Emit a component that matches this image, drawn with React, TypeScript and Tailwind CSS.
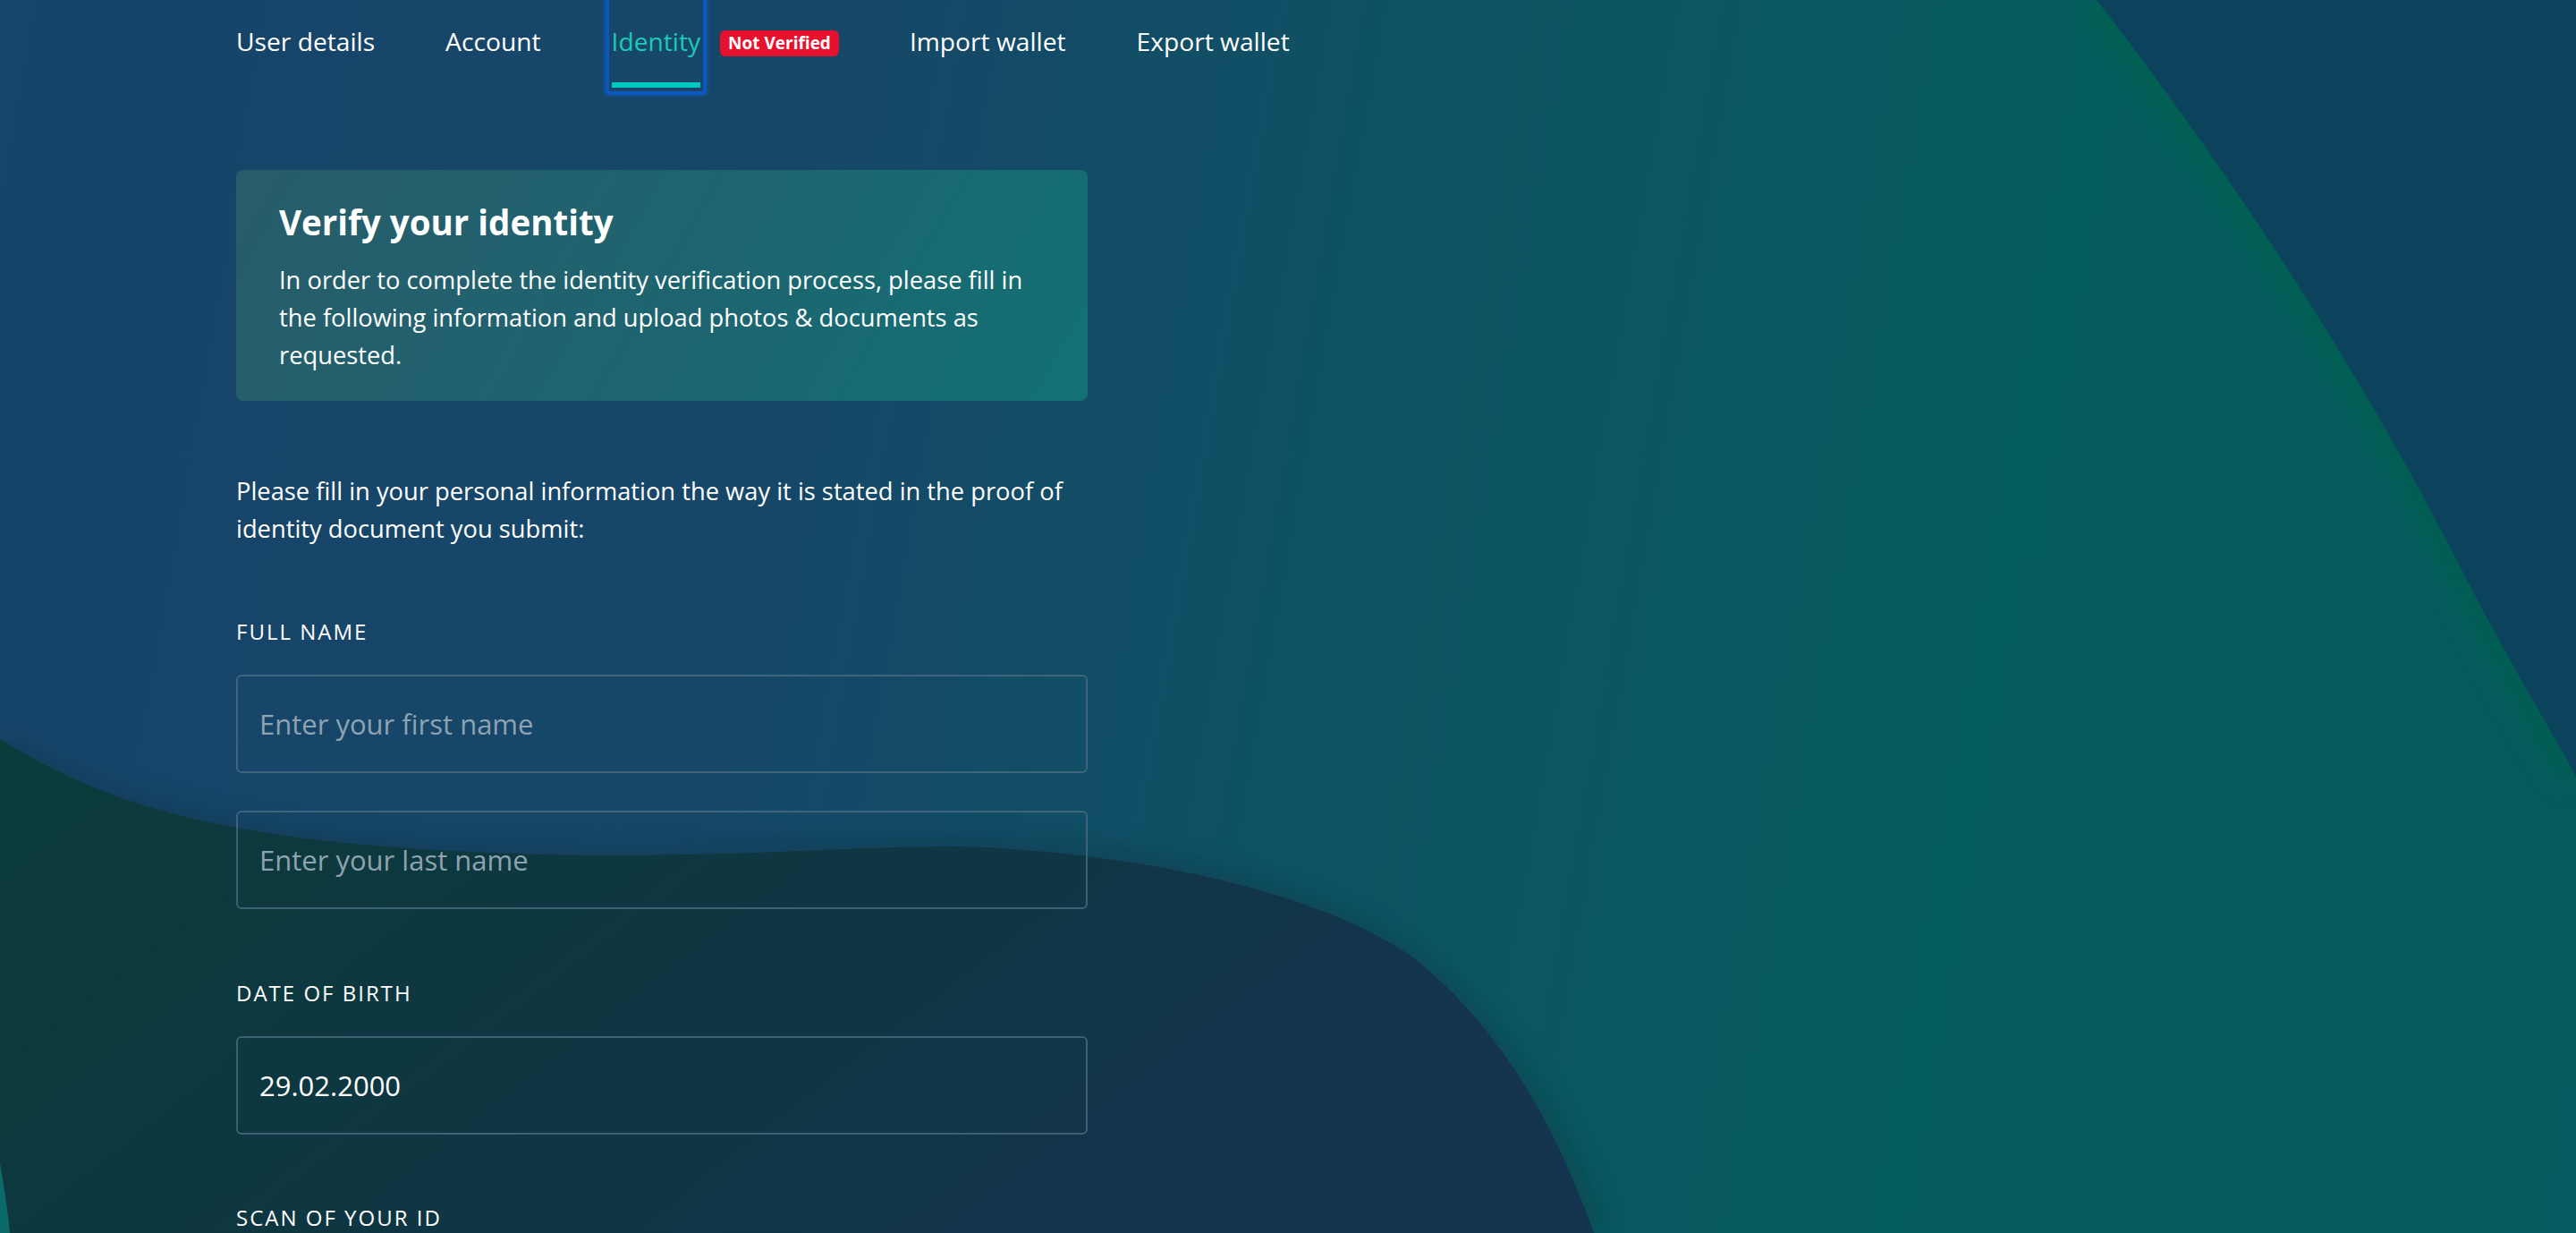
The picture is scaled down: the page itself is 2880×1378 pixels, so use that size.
import React from "react";

const tabs = ["User details", "Account", "Identity", "Import wallet", "Export wallet"];

const Backdrop = () => (
  <svg
    className="absolute inset-0 w-full h-full"
    viewBox="0 0 2880 1378"
    preserveAspectRatio="none"
  >
    <defs>
      <linearGradient id="dark" x1="0" y1="0" x2="1" y2="0.4">
        <stop offset="0" stopColor="#0b3b3b" />
        <stop offset="0.6" stopColor="#0f3643" />
        <stop offset="1" stopColor="#14344f" />
      </linearGradient>
      <filter id="soft" x="-10%" y="-10%" width="120%" height="120%">
        <feGaussianBlur stdDeviation="14" />
      </filter>
    </defs>

    {/* green rim along the top-right curve */}
    <path
      d="M2344 0 C2500 200 2640 420 2733 600 S2850 810 2880 868"
      fill="none"
      stroke="#02604f"
      strokeWidth="40"
      opacity="0.8"
      filter="url(#soft)"
    />
    <path
      d="M2344 0 C2500 200 2640 420 2733 600 S2850 810 2880 868 L2880 0 Z"
      fill="#0c435c"
    />

    {/* dark wave bottom left */}
    <path
      d="M0 836 C120 905 250 950 606 960 C850 965 1000 945 1120 952 C1300 962 1480 1005 1580 1075 C1680 1155 1740 1262 1782 1378"
      fill="none"
      stroke="#0a2c35"
      strokeWidth="24"
      opacity="0.35"
      filter="url(#soft)"
    />
    <path
      d="M0 826 C120 900 250 945 606 955 C850 960 1000 940 1120 948 C1300 960 1480 1000 1580 1070 C1680 1150 1740 1260 1782 1378 L0 1378 Z"
      fill="url(#dark)"
    />
    <path d="M0 1300 C5 1330 9 1355 11 1378 L0 1378 Z" fill="#0b6b6a" />
  </svg>
);

const Field = ({ placeholder, value }: { placeholder?: string; value?: string }) => (
  <input
    readOnly
    placeholder={placeholder}
    defaultValue={value}
    className="w-full h-[110px] rounded-[6px] border-2 border-[#4a6c80]/80 bg-transparent pl-[24px] text-[31px] text-white placeholder:text-[#8ea3b0] outline-none"
  />
);

const Label = ({ children }: { children: React.ReactNode }) => (
  <div className="text-[24px] leading-[32px] font-medium tracking-[2px] text-white uppercase">
    {children}
  </div>
);

export default function App() {
  return (
    <div
      className="relative w-full h-[1378px] overflow-hidden bg-[linear-gradient(100deg,#17446a_0%,#164768_30%,#0d5463_55%,#065d5e_75%,#075a5f_100%)]"
      style={{ fontFamily: '"Open Sans", "Noto Sans", sans-serif' }}
    >
      <Backdrop />

      <div className="relative pl-[264px]">
        {/* TABS */}
        <nav className="flex gap-[79px] h-[98px] text-[28.2px] text-white">
          {tabs.map((tab) =>
            tab === "Identity" ? (
              <div key={tab} className="flex items-start gap-[22px]">
                <div className="relative h-[98px] pt-[25px] leading-[42px] text-[#1fc9b6]">
                  <div className="absolute -left-[7px] -right-[7px] -top-[6px] -bottom-[8px] border-4 border-[#0b58c2] rounded-[4px] shadow-[0_0_6px_rgba(20,110,220,0.6)]" />
                  {tab}
                  <div className="absolute left-0 right-0 top-[92px] h-[6px] bg-[#00c9bd]" />
                </div>
                <span className="mt-[34px] h-[29px] px-[9px] rounded-[6px] bg-[#e8112d] text-[19px] leading-[29px] font-bold text-white">
                  Not Verified
                </span>
              </div>
            ) : (
              <div key={tab} className="pt-[25px] leading-[42px]">
                {tab}
              </div>
            )
          )}
        </nav>

        <div className="w-[952px]">
          {/* INTRO CARD */}
          <div className="mt-[92px] rounded-[8px] bg-[linear-gradient(120deg,#285c6a_0%,#1d6570_55%,#127174_100%)] px-[48px] pt-[36px] pb-[30px]">
            <h1 className="text-[38.5px] leading-[44px] font-bold text-white">Verify your identity</h1>
            <p className="mt-[22px] text-[27.3px] leading-[42px] text-white">
              In order to complete the identity verification process, please fill in the following information and upload photos &amp; documents as requested.
            </p>
          </div>

          <p className="mt-[80px] text-[27.3px] leading-[42px] text-white">
            Please fill in your personal information the way it is stated in the proof of identity document you submit:
          </p>

          {/* FORM */}
          <div className="mt-[78px]">
            <Label>Full name</Label>
            <div className="mt-[32px] flex flex-col gap-[42px]">
              <Field placeholder="Enter your first name" />
              <Field placeholder="Enter your last name" />
            </div>
          </div>

          <div className="mt-[78px]">
            <Label>Date of birth</Label>
            <div className="mt-[32px]">
              <Field value="29.02.2000" />
            </div>
          </div>

          <div className="mt-[77px]">
            <Label>Scan of your ID</Label>
          </div>
        </div>
      </div>
    </div>
  );
}
